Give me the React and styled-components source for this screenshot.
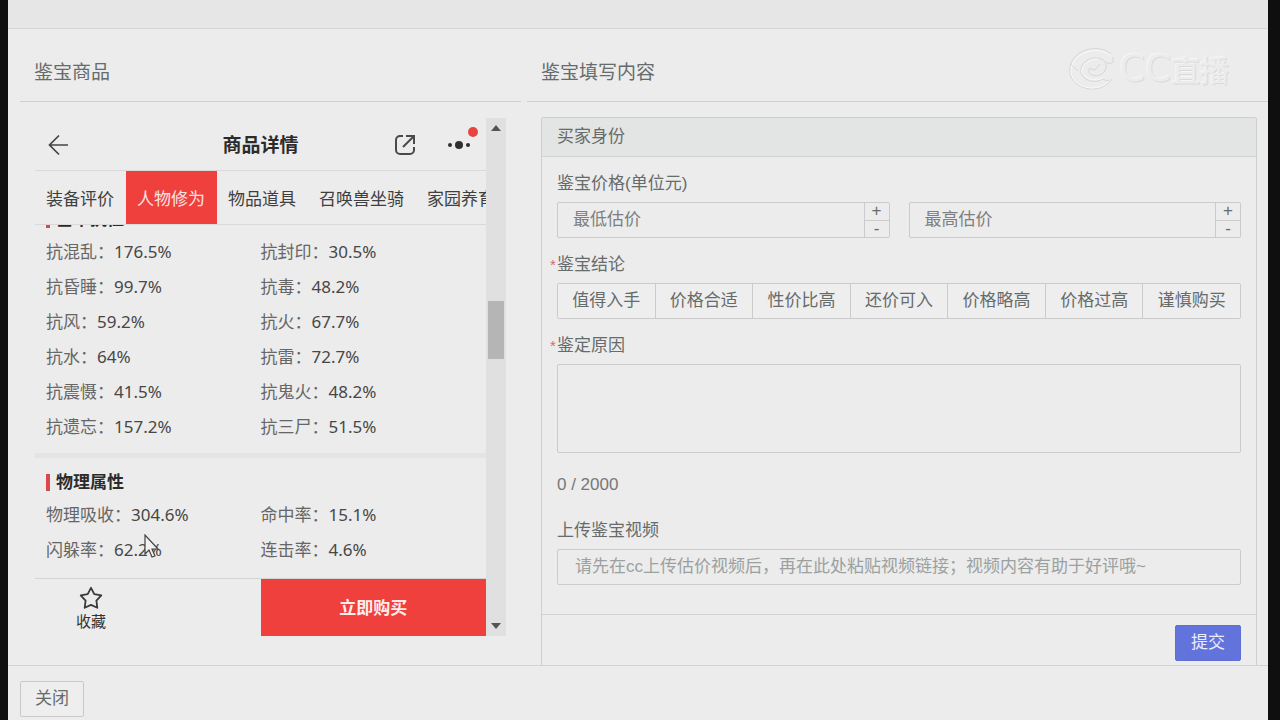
import React from "react";
import styled, { createGlobalStyle } from "styled-components";

const GlobalStyle = createGlobalStyle`
  * {
    box-sizing: border-box;
  }

  body {
    margin: 0;
    background: #0f0f0f;
    color: #666b6b;
    font-family: "Liberation Sans", "Noto Sans CJK SC", sans-serif;
    font-size: 17px;
    line-height: 24px;
  }

  button,
  input,
  textarea {
    font: inherit;
    color: inherit;
    border-radius: 0;
    outline: none;
  }

  button {
    cursor: pointer;
  }
`;

const Modal = styled.div`
  position: relative;
  display: flex;
  flex-direction: column;
  height: 100vh;
  margin: 0 12px 0 8px;
  background: #ececec;
  overflow: hidden;
`;

const TopBar = styled.header`
  flex: none;
  height: 29px;
  background: #e6e6e6;
  border-bottom: 1px solid #d6d6d6;
`;

const ModalBody = styled.main`
  flex: 1;
  min-height: 0;
  display: grid;
  grid-template-columns: 501px minmax(0, 1fr);
  gap: 6px;
  padding: 14px 0 0 12px;
  overflow: hidden;
`;

const ModalFooter = styled.footer`
  flex: none;
  padding: 15px 12px 3px;
  border-top: 1px solid #d2d2d2;
`;

const CloseButton = styled.button`
  display: block;
  height: 36px;
  padding: 0 14px;
  background: #eeeeee;
  border: 1px solid #c9c9c9;
  border-radius: 2px;
`;

const ColumnTitle = styled.h2`
  margin: 0;
  padding: 15px 14px 13px;
  border-bottom: 1px solid #d0d0d0;
  font-size: 19px;
  font-weight: 400;
  line-height: 30px;
`;

/* ---------- goods preview ---------- */

const Phone = styled.section`
  display: flex;
  height: 518px;
  margin: 16px 15px 0;
  font-family: "Noto Sans", "Noto Sans CJK SC", sans-serif;
`;

const Screen = styled.div`
  flex: 1;
  min-width: 0;
  display: flex;
  flex-direction: column;
  color: #3c3c3c;
`;

const PhoneHeader = styled.div`
  flex: none;
  display: grid;
  grid-template-columns: 100px 1fr 100px;
  align-items: center;
  height: 53px;
  padding: 1px 12px 0;
  border-bottom: 1px solid #d9d9d9;
`;

const PhoneTitle = styled.h3`
  margin: 0;
  color: #2b2b2b;
  font-size: 19px;
  font-weight: 700;
  text-align: center;
`;

const HeaderActions = styled.div`
  display: flex;
  justify-content: flex-end;
  align-items: center;
  gap: 31px;
  padding-right: 3px;
`;

const IconButton = styled.button`
  position: relative;
  display: flex;
  padding: 0;
  width: max-content;
  background: none;
  border: none;
`;

const RedDot = styled.span`
  position: absolute;
  top: -13px;
  right: -7px;
  width: 10px;
  height: 10px;
  border-radius: 50%;
  background: #e8433f;
`;

const Tabs = styled.nav`
  flex: none;
  display: flex;
  height: 54px;
  border-bottom: 1px solid #d9d9d9;
  overflow: hidden;
`;

const Tab = styled.button`
  flex: none;
  padding: 2px 12px 0 11px;
  border: none;
  background: ${(props) => (props.$active ? "#ef403d" : "transparent")};
  color: ${(props) => (props.$active ? "#fbe3e2" : "#3f3f3f")};
`;

const Content = styled.div`
  flex: 1;
  min-height: 0;
  display: flex;
  flex-direction: column;
  justify-content: flex-end;
  padding-bottom: 2px;
  overflow: hidden;
`;

const Group = styled.div`
  padding: 12px 11px 9px;

  & + & {
    border-top: 5px solid #e4e4e4;
  }
`;

const GroupTitle = styled.h4`
  display: flex;
  align-items: center;
  gap: 6px;
  margin: 0;
  color: #2b2b2b;
  font-size: 17px;
  line-height: 24px;

  &:before {
    content: "";
    width: 4px;
    height: 17px;
    background: #d9484a;
  }
`;

const Attrs = styled.dl`
  display: grid;
  grid-template-columns: 1fr 1fr;
  margin: 3px 0 0;
`;

const Attr = styled.div`
  display: flex;
  line-height: 35px;
`;

const AttrName = styled.dt`
  color: #666666;
`;

const AttrValue = styled.dd`
  margin: 0;
  color: #474747;
`;

const BuyBar = styled.div`
  flex: none;
  display: flex;
  height: 58px;
  border-top: 1px solid #d4d4d4;
`;

const Favorite = styled.button`
  display: flex;
  flex-direction: column;
  align-items: center;
  gap: 1px;
  width: 112px;
  padding: 7px 0 0;
  border: none;
  background: none;
  color: #333333;
  font-size: 15px;
  line-height: 20px;
`;

const BuyButton = styled.button`
  width: 50%;
  margin-left: auto;
  border: none;
  background: #ef403d;
  color: #fdeeee;
  font-weight: 700;
`;

const ScrollTrack = styled.div`
  flex: none;
  display: flex;
  flex-direction: column;
  align-items: center;
  width: 20px;
  background: #e0e0e0;
`;

const ScrollArrow = styled.span`
  display: flex;
  align-items: center;
  justify-content: center;
  height: 20px;
`;

const ScrollThumb = styled.div`
  width: 16px;
  height: 58px;
  margin: 163px 0 auto;
  background: #b5b5b5;
`;

/* ---------- appraisal form ---------- */

const Form = styled.form`
  margin: 15px 11px 0 14px;
  border: 1px solid #cfcfcf;
  border-radius: 2px;
`;

const FormHeader = styled.div`
  height: 39px;
  padding: 7px 15px;
  background: #e3e5e4;
  border-bottom: 1px solid #d0d3d2;
`;

const FormBody = styled.div`
  padding: 15px 15px 29px;
`;

const Label = styled.label`
  display: block;
  position: relative;
  margin-bottom: 6px;

  &:before {
    content: ${(props) => (props.$required ? '"*"' : "none")};
    position: absolute;
    left: -7px;
    color: #dd6868;
    font-size: 15px;
  }
`;

const Field = styled.div`
  margin-bottom: 15px;
`;

const PriceRow = styled.div`
  display: grid;
  grid-template-columns: 1fr 1fr;
  gap: 19px;
`;

const NumberBox = styled.div`
  display: flex;
  height: 36px;
  border: 1px solid #cbcbcb;
  border-radius: 2px;
`;

const NumberInput = styled.input`
  flex: 1;
  min-width: 0;
  padding: 0 15px;
  border: none;
  background: transparent;

  &::placeholder {
    color: #7d8080;
  }
`;

const Stepper = styled.div`
  display: flex;
  flex-direction: column;
  width: 25px;
  border-left: 1px solid #cbcbcb;
`;

const StepButton = styled.button`
  flex: 1;
  padding: 0;
  border: none;
  background: transparent;
  line-height: 16px;

  & + & {
    border-top: 1px solid #cbcbcb;
  }
`;

const Choices = styled.div`
  display: flex;
  border: 1px solid #cbcbcb;
  border-radius: 2px;
`;

const Choice = styled.button`
  flex: 1;
  height: 34px;
  padding: 0;
  border: none;
  background: #eeeeee;
  white-space: nowrap;

  & + & {
    border-left: 1px solid #cbcbcb;
  }
`;

const Reason = styled.textarea`
  display: block;
  width: 100%;
  height: 89px;
  padding: 6px 15px;
  resize: none;
  background: transparent;
  border: 1px solid #cbcbcb;
  border-radius: 2px;
`;

const Counter = styled.div`
  margin: 20px 0 22px;
  color: #777777;
`;

const VideoInput = styled.input`
  display: block;
  width: 100%;
  height: 36px;
  padding: 0 17px;
  background: transparent;
  border: 1px solid #cbcbcb;
  border-radius: 2px;

  &::placeholder {
    color: #9ba1a0;
  }
`;

const FormFooter = styled.div`
  display: flex;
  justify-content: flex-end;
  padding: 10px 15px;
  border-top: 1px solid #d2d2d2;
`;

const SubmitButton = styled.button`
  height: 36px;
  padding: 0 15px;
  border: 1px solid #5d70d8;
  border-radius: 2px;
  background: #6274dc;
  color: #e9ecfb;
`;

/* ---------- overlays ---------- */

const Watermark = styled.div`
  position: absolute;
  top: 45px;
  right: 39px;
  display: flex;
  align-items: center;
  color: #ececec;
  font-family: "Noto Sans CJK SC", sans-serif;
  font-size: 29px;
  font-weight: 500;
  line-height: 48px;
  text-shadow: 1px 1px 0 #dadada, -1px -1px 0 #f6f6f6;
  pointer-events: none;
`;

const WatermarkLatin = styled.span`
  font-family: "DejaVu Sans", sans-serif;
  font-size: 37px;
  font-weight: 400;
`;

const Pointer = styled.svg`
  position: absolute;
  top: 534px;
  left: 136px;
  pointer-events: none;
`;

const tabs = ["装备评价", "人物修为", "物品道具", "召唤兽坐骑", "家园养育"];

const groups = [
  {
    title: "基本抗性",
    attrs: [
      ["抗混乱", "176.5%"],
      ["抗封印", "30.5%"],
      ["抗昏睡", "99.7%"],
      ["抗毒", "48.2%"],
      ["抗风", "59.2%"],
      ["抗火", "67.7%"],
      ["抗水", "64%"],
      ["抗雷", "72.7%"],
      ["抗震慑", "41.5%"],
      ["抗鬼火", "48.2%"],
      ["抗遗忘", "157.2%"],
      ["抗三尸", "51.5%"],
    ],
  },
  {
    title: "物理属性",
    attrs: [
      ["物理吸收", "304.6%"],
      ["命中率", "15.1%"],
      ["闪躲率", "62.2%"],
      ["连击率", "4.6%"],
    ],
  },
];

const choices = [
  "值得入手",
  "价格合适",
  "性价比高",
  "还价可入",
  "价格略高",
  "价格过高",
  "谨慎购买",
];

const BackIcon = () => (
  <svg width="24" height="24" fill="none" stroke="#444" strokeWidth="1.7">
    <path d="M21 12H2.500M12 2.500L2.500 12l9.500 9.500" />
  </svg>
);

const ShareIcon = () => (
  <svg width="22" height="22" fill="none" stroke="#4a4a4a" strokeWidth="2">
    <path d="M9 2H6a4 4 0 0 0-4 4v10a4 4 0 0 0 4 4h10a4 4 0 0 0 4-4v-3" />
    <path d="M12 2h8v8M20 2L9 13" />
  </svg>
);

const MoreIcon = () => (
  <svg width="24" height="10" fill="#2f2f2f">
    <circle cx="3" cy="5" r="2" />
    <circle cx="12" cy="5" r="4" />
    <circle cx="21" cy="5" r="2" />
  </svg>
);

const StarIcon = () => (
  <svg width="24" height="24" fill="none" stroke="#3a3a3a" strokeWidth="1.8">
    <path
      strokeLinejoin="round"
      d="M12 1.800l3.300 6.400 7 1.200-4.900 5.200.9 7.200L12 18.900l-6.300 2.900.9-7.200L1.700 9.400l7-1.200z"
    />
  </svg>
);

const LogoIcon = () => (
  <svg width="52" height="46" fill="none" strokeWidth="1">
    <g stroke="#d6d6d6">
      <path d="M44 8C34-1 13 1 5 15c-7 14 3 27 19 28 9 0 16-3 21-10" />
      <path d="M45 33c-2 2-6 2-9 0-8 5-20 2-22-7-1-9 8-15 17-14 6 1 9 5 8 10-1 6-8 9-14 7-3-1-4-4-3-6" />
      <path d="M46 11v5c-2 2-5 2-7 0M4 18l7 7M22 22l6 2 5-6" />
    </g>
    <g stroke="#f9f9f9">
      <path d="M44 10C34 1 14 3 6 17c-6 13 3 24 18 25 9 0 15-3 20-9" />
      <path d="M36 32c-8 4-19 1-21-6-1-8 8-13 16-13" />
    </g>
  </svg>
);

const NumberField = ({ id, placeholder }) => (
  <NumberBox>
    <NumberInput id={id} placeholder={placeholder} aria-label={placeholder} />
    <Stepper>
      <StepButton type="button">+</StepButton>
      <StepButton type="button">-</StepButton>
    </Stepper>
  </NumberBox>
);

const GoodsPreview = () => (
  <Phone>
    <Screen>
      <PhoneHeader>
        <IconButton aria-label="返回">
          <BackIcon />
        </IconButton>
        <PhoneTitle>商品详情</PhoneTitle>
        <HeaderActions>
          <IconButton aria-label="分享">
            <ShareIcon />
          </IconButton>
          <IconButton aria-label="更多">
            <MoreIcon />
            <RedDot />
          </IconButton>
        </HeaderActions>
      </PhoneHeader>
      <Tabs>
        {tabs.map((tab) => (
          <Tab key={tab} $active={tab === "人物修为"}>
            {tab}
          </Tab>
        ))}
      </Tabs>
      <Content>
        {groups.map((group) => (
          <Group key={group.title}>
            <GroupTitle>{group.title}</GroupTitle>
            <Attrs>
              {group.attrs.map(([name, value]) => (
                <Attr key={name}>
                  <AttrName>{name}：</AttrName>
                  <AttrValue>{value}</AttrValue>
                </Attr>
              ))}
            </Attrs>
          </Group>
        ))}
      </Content>
      <BuyBar>
        <Favorite>
          <StarIcon />
          收藏
        </Favorite>
        <BuyButton>立即购买</BuyButton>
      </BuyBar>
    </Screen>
    <ScrollTrack>
      <ScrollArrow>
        <svg width="10" height="6" fill="#555">
          <path d="M0 6L5 0l5 6z" />
        </svg>
      </ScrollArrow>
      <ScrollThumb />
      <ScrollArrow>
        <svg width="10" height="6" fill="#555">
          <path d="M0 0h10L5 6z" />
        </svg>
      </ScrollArrow>
    </ScrollTrack>
  </Phone>
);

const AppraisalForm = () => (
  <Form onSubmit={(e) => e.preventDefault()}>
    <FormHeader>买家身份</FormHeader>
    <FormBody>
      <Field>
        <Label htmlFor="min-price">鉴宝价格(单位元)</Label>
        <PriceRow>
          <NumberField id="min-price" placeholder="最低估价" />
          <NumberField id="max-price" placeholder="最高估价" />
        </PriceRow>
      </Field>
      <Field>
        <Label as="div" id="result-label" $required>
          鉴宝结论
        </Label>
        <Choices role="group" aria-labelledby="result-label">
          {choices.map((choice) => (
            <Choice type="button" key={choice}>
              {choice}
            </Choice>
          ))}
        </Choices>
      </Field>
      <Field>
        <Label htmlFor="reason" $required>
          鉴定原因
        </Label>
        <Reason id="reason" maxLength={2000} />
        <Counter>0 / 2000</Counter>
      </Field>
      <Label htmlFor="video">上传鉴宝视频</Label>
      <VideoInput
        id="video"
        placeholder="请先在cc上传估价视频后，再在此处粘贴视频链接；视频内容有助于好评哦~"
      />
    </FormBody>
    <FormFooter>
      <SubmitButton type="submit">提交</SubmitButton>
    </FormFooter>
  </Form>
);

export default function App() {
  return (
    <>
      <GlobalStyle />
      <Modal>
        <TopBar />
        <ModalBody>
          <section>
            <ColumnTitle>鉴宝商品</ColumnTitle>
            <GoodsPreview />
          </section>
          <section>
            <ColumnTitle>鉴宝填写内容</ColumnTitle>
            <AppraisalForm />
          </section>
        </ModalBody>
        <ModalFooter>
          <CloseButton>关闭</CloseButton>
        </ModalFooter>
        <Watermark>
          <LogoIcon />
          <WatermarkLatin>CC</WatermarkLatin>
          直播
        </Watermark>
        <Pointer width="18" height="26" viewBox="0 0 18 26">
          <path
            d="M1 1v19l4-4 3 7 3-1-3-7h6z"
            fill="#f2f2f2"
            stroke="#444"
            strokeWidth="1.2"
          />
        </Pointer>
      </Modal>
    </>
  );
}
